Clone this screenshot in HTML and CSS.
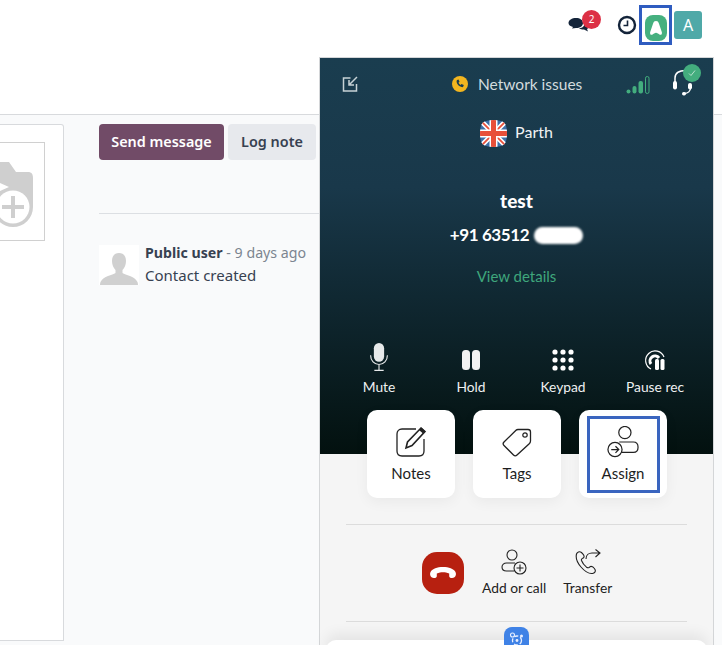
FILE: index.html
```html
<!DOCTYPE html>
<html lang="en">
<head>
<meta charset="utf-8">
<title>Contact</title>
<link rel="stylesheet" href="styles.css">
</head>
<body>
<header class="topbar">
  <div class="chat-icon">
    <svg width="23" height="20" viewBox="0 0 23 20"><path fill="#14243a" d="M8 3c4 0 7 2 7 5s-3 5-7 5l-4 .5L5 12C2 11 .5 10 .5 8 .5 5 4 3 8 3z"/><path fill="#14243a" d="M16 7c3 0 5 1.500 5 4 0 1.500-1 2.500-2 3l1 2.500-4-2c-2 0-4-.5-5-1.500 4 0 6-2 5-6z"/></svg>
    <span class="badge">2</span>
  </div>
  <svg class="clock" width="20" height="20" viewBox="0 0 20 20"><circle cx="10" cy="10" r="8" fill="#fff" stroke="#14243a" stroke-width="2.400"/><path d="M10.500 5.500v5H6.500" fill="none" stroke="#14243a" stroke-width="1.600"/></svg>
  <div class="app-highlight">
    <div class="app-icon"><svg width="12" height="14" viewBox="0 0 12 14"><path fill="#fff" d="M6 0c1.600 0 2.400.8 2.900 2.500L11.800 11c.5 2-.6 3.300-2 2.700C8.500 13 7.200 11.800 6 11.800S3.500 13 2.200 13.700c-1.400.6-2.500-.7-2-2.700L3.100 2.500C3.600.8 4.400 0 6 0z"/></svg></div>
  </div>
  <div class="avatar">A</div>
</header>

<main class="main">
  <section class="form-card">
    <div class="image-box">
      <svg width="60" height="70" viewBox="0 0 60 70"><path fill="#cfcfcf" d="M0 2H33L40 12H52C55.500 12 57 14 57 18V47A20 20 0 0 1 17 47V40H0z"/><path fill="#fff" d="M24 23l9 4-9 4z"/><circle cx="37" cy="47" r="16.500" fill="#fff"/><path d="M37 36v22M26 47h22" stroke="#cfcfcf" stroke-width="4"/></svg>
    </div>
  </section>
  <section class="chatter">
    <div class="chatter-buttons">
      <button class="btn btn-primary">Send message</button>
      <button class="btn btn-light">Log note</button>
    </div>
    <hr class="chatter-rule">
    <article class="message">
      <div class="msg-avatar"><svg width="40" height="40" viewBox="0 0 40 40"><rect width="40" height="40" fill="#fff"/><path fill="#d0d0d0" d="M20 8c4.500 0 7 3 7 8 0 4-1.500 7-3.500 9v3c3 2 12 3 15 9 .3 1 .5 2 .5 3H1c0-1 .2-2 .5-3 3-6 12-7 15-9v-3c-2-2-3.500-5-3.500-9 0-5 2.500-8 7-8z"/></svg></div>
      <div class="msg-body">
        <div class="msg-head"><strong>Public user</strong> <span>- 9 days ago</span></div>
        <div class="msg-text">Contact created</div>
      </div>
    </article>
  </section>
</main>

<aside class="phone">
  <div class="phone-head">
    <svg class="minimize" width="18" height="18" viewBox="0 0 18 18"><path d="M9.500 3H2.500v13h13V9" fill="none" stroke="#c7d2d6" stroke-width="1.500"/><path d="M16 2L8 10M8 5v5h5" fill="none" stroke="#c7d2d6" stroke-width="1.500"/></svg>
    <div class="net">
      <svg width="16" height="16" viewBox="0 0 16 16"><circle cx="8" cy="8" r="8" fill="#f3b61f"/><path fill="#1a3d4f" d="M5 4l1.500-.5 1 2.300-1 1c.4 1 1.100 1.700 2 2.100l1-1 2.300 1-.5 1.600c-.3.600-1 .8-1.700.6-2.700-.7-4.500-2.600-5-5 0-.9.100-1.700.4-2.100z"/></svg>
      <span>Network issues</span>
    </div>
    <svg class="signal" width="24" height="18" viewBox="0 0 24 18"><circle cx="2.500" cy="15.500" r="2" fill="#43ad7e"/><rect x="6.500" y="10" width="4" height="7.500" rx="2" fill="#43ad7e"/><rect x="12.500" y="5" width="4.500" height="12.500" rx="2" fill="#43ad7e"/><rect x="19.500" y=".5" width="3.500" height="17" rx="1.700" fill="none" stroke="#43ad7e"/></svg>
    <div class="headset">
      <svg width="22" height="28" viewBox="0 0 22 28"><path d="M3 14V10C3 5 7 2.500 14 2.500" fill="none" stroke="#fff" stroke-width="1.500"/><path d="M18.500 20c0 3-2.500 5.500-6 5.500" fill="none" stroke="#fff" stroke-width="1.300"/><rect x="1" y="13" width="4" height="8.500" rx="2" fill="#fff"/><rect x="16" y="15" width="4" height="6.500" rx="2" fill="#fff"/><rect x="10" y="24" width="4" height="3.500" rx="1.700" fill="#fff"/></svg>
      <span class="status"><svg width="10" height="10" viewBox="0 0 10 10"><path d="M2 5.500l2 2 4-5" fill="none" stroke="#b9e2cf" stroke-width="1"/></svg></span>
    </div>
  </div>

  <div class="agent">
    <svg class="flag" width="27" height="27" viewBox="0 0 27 27"><defs><clipPath id="sq"><path d="M13.500 0C24 0 27 3 27 13.500S24 27 13.500 27 0 24 0 13.500 3 0 13.500 0z"/></clipPath></defs><g clip-path="url(#sq)"><rect width="27" height="27" fill="#3d6fa8"/><path d="M0 0l27 27M27 0L0 27" stroke="#fff" stroke-width="5"/><path d="M0 0l27 27M27 0L0 27" stroke="#e8503a" stroke-width="1.800"/><path d="M13.500 0v27M0 13.500h27" stroke="#fff" stroke-width="8"/><path d="M13.500 0v27M0 13.500h27" stroke="#e8503a" stroke-width="5"/></g></svg>
    <span>Parth</span>
  </div>

  <div class="caller">
    <div class="caller-name">test</div>
    <div class="caller-num">+91 63512 <span class="blur"></span></div>
    <div class="caller-link">View details</div>
  </div>

  <div class="controls">
    <div class="ctrl">
      <svg width="24" height="30" viewBox="0 0 24 30"><rect x="6.500" y="0" width="11" height="20" rx="5.500" fill="#e7e9ea"/><path d="M3 13c0 6 4 10 9 10s9-4 9-10M12 23v6M7 29.300h10" fill="none" stroke="#e7e9ea" stroke-width="1.200"/></svg>
      <span>Mute</span>
    </div>
    <div class="ctrl">
      <svg width="20" height="22" viewBox="0 0 20 22"><rect x="1" y="1" width="8" height="20" rx="3.500" fill="#f2f2f2"/><rect x="11" y="1" width="8" height="20" rx="3.500" fill="#f2f2f2"/></svg>
      <span>Hold</span>
    </div>
    <div class="ctrl">
      <svg width="22" height="22" viewBox="0 0 22 22" fill="#fff"><circle cx="3" cy="3" r="2.600"/><circle cx="11" cy="3" r="2.600"/><circle cx="19" cy="3" r="2.600"/><circle cx="3" cy="11" r="2.600"/><circle cx="11" cy="11" r="2.600"/><circle cx="19" cy="11" r="2.600"/><circle cx="3" cy="19" r="2.600"/><circle cx="11" cy="19" r="2.600"/><circle cx="19" cy="19" r="2.600"/></svg>
      <span>Keypad</span>
    </div>
    <div class="ctrl">
      <svg width="22" height="22" viewBox="0 0 22 22"><path d="M7 20A9.500 9.500 0 1 1 20 8" fill="none" stroke="#fff" stroke-width="1.200"/><path d="M7 15a4.800 4.800 0 1 1 8-6" fill="none" stroke="#fff" stroke-width="3"/><rect x="11" y="10" width="4" height="11" rx="1.500" fill="#fff"/><rect x="16.500" y="10" width="4" height="11" rx="1.500" fill="#fff"/></svg>
      <span>Pause rec</span>
    </div>
  </div>

  <div class="cards">
    <div class="card">
      <svg width="32" height="32" viewBox="0 0 32 32"><path d="M21 3H7C4 3 2 5 2 8v17c0 3 2 5 5 5h17c3 0 5-2 5-5V13" fill="none" stroke="#222" stroke-width="1.300"/><path d="M26 2l4 3.500-13 14-6 2.500 1.500-6z" fill="#fff" stroke="#222" stroke-width="1.600"/><path d="M24 4l4 3.500 2-2.500-3.500-3.500z" fill="#222"/></svg>
      <span>Notes</span>
    </div>
    <div class="card">
      <svg width="32" height="32" viewBox="0 0 32 32"><path d="M17 3.500h10c1.500 0 2.500 1 2.500 2.500v9c0 1-.4 1.800-1 2.500L16 29c-1 1-2.500 1-3.500 0L3 19.500c-1-1-1-2.500 0-3.500L15 4.200c.5-.5 1.200-.7 2-.7z" fill="none" stroke="#222" stroke-width="1.300"/><circle cx="24" cy="9" r="2.200" fill="none" stroke="#222" stroke-width="1.200"/></svg>
      <span>Tags</span>
    </div>
    <div class="card card-marked">
      <svg width="34" height="34" viewBox="0 0 34 34"><circle cx="19" cy="7" r="6.500" fill="none" stroke="#222" stroke-width="1.300"/><path d="M13 17h15c3 0 5 2 5 5.500S31 28 28 28H14" fill="none" stroke="#222" stroke-width="1.300"/><circle cx="8.500" cy="25" r="7.500" fill="#fff" stroke="#222" stroke-width="1.300"/><path d="M4.500 25h8M9 21.500l3.500 3.500L9 28.500" fill="none" stroke="#222" stroke-width="1.300"/></svg>
      <span>Assign</span>
    </div>
  </div>

  <hr class="phone-rule first-rule">

  <div class="call-row">
    <div class="hangup"><svg width="26" height="12" viewBox="0 0 26 12"><path fill="#fff" d="M13 0C7 0 2.500 2 .8 4.500-.2 6-.2 8 .8 9.500c.6.800 1.500 1.300 3 1.500 1.500.2 3-.5 3-2V6.500C9 5.500 11 5.200 13 5.200s4 .3 6.200 1.300V9c0 1.500 1.500 2.200 3 2 1.500-.2 2.400-.7 3-1.500 1-1.500 1-3.500 0-5C23.500 2 19 0 13 0z"/></svg></div>
    <div class="call-action">
      <svg width="26" height="26" viewBox="0 0 26 26"><circle cx="11" cy="6" r="5" fill="none" stroke="#222" stroke-width="1.100"/><path d="M14 14H5.500C3 14 1 15.500 1 18s2 4 4.500 4H13" fill="none" stroke="#222" stroke-width="1.100"/><circle cx="19" cy="19" r="6" fill="#f5f5f5" stroke="#222" stroke-width="1.100"/><path d="M19 15.500v7M15.500 19h7" stroke="#222" stroke-width="1.100"/></svg>
      <span>Add or call</span>
    </div>
    <div class="call-action">
      <svg width="26" height="26" viewBox="0 0 26 26"><path d="M6.500 3.500C4.500 2 2 3 1.500 5c-1 4 1 9 4.500 13s8 7 11.500 6.500c2-.3 3.500-2 2.500-4l-1-1.500c-.5-.8-2.500-2-3.500-1.500l-1.500 1c-.8.500-1.500.3-2.500-.3-2-1.700-4-4-5-6.700-.3-1 .1-1.700 1-2l1-.7c1-.6.600-2.500-.3-3.500z" fill="none" stroke="#222" stroke-width="1.100"/><path d="M11 10c0-4 3-6 6-6h8M20.500 .5L25 4l-4.500 4" fill="none" stroke="#222" stroke-width="1.100"/></svg>
      <span>Transfer</span>
    </div>
  </div>

  <hr class="phone-rule second-rule">

  <div class="assist">
    <div class="assist-badge"><svg width="16" height="16" viewBox="0 0 16 16"><circle cx="8" cy="8.500" r="4.500" fill="none" stroke="#e9f0ff" stroke-width="1.300" stroke-dasharray="4 2"/><circle cx="3.500" cy="3" r="2" fill="none" stroke="#e9f0ff" stroke-width="1.100"/><circle cx="12.500" cy="4" r="1.500" fill="#e9f0ff"/><circle cx="8" cy="8.500" r="1.400" fill="#e9f0ff"/></svg></div>
  </div>
</aside>
```

FILE: styles.css
```css
*, *::before, *::after { box-sizing: border-box; }
html, body { margin: 0; padding: 0; }
body {
  width: 722px;
  height: 645px;
  overflow: hidden;
  position: relative;
  background: #fff;
  font-family: "Noto Sans", sans-serif;
  color: #374151;
}

/* top navigation */
.topbar {
  height: 115px;
  border-bottom: 1px solid #d8dadd;
  display: flex;
  align-items: flex-start;
  padding: 11px 20px 0 0;
  background: #fff;
}
.chat-icon { position: relative; width: 23px; height: 20px; margin-left: auto; margin-top: 4px; }
.chat-icon svg { display: block; }
.badge {
  position: absolute;
  left: 14px;
  top: -5px;
  width: 19px;
  height: 19px;
  border-radius: 50%;
  background: #dc3045;
  color: #fff;
  font-size: 10px;
  line-height: 18px;
  text-align: center;
}
.clock { margin-left: 26px; margin-top: 4px; }
.app-highlight {
  width: 33px;
  height: 40px;
  margin: -6px 2px 0 2px;
  border: 3px solid #2f5cc0;
  display: flex;
  justify-content: center;
  padding-top: 7px;
}
.app-icon {
  width: 22px;
  height: 26px;
  border-radius: 8px;
  background: #45b07f;
  display: flex;
  align-items: center;
  justify-content: center;
}
.avatar {
  width: 28px;
  height: 28px;
  border-radius: 3px;
  background: #4fa9a8;
  color: #fff;
  font-size: 16px;
  line-height: 28px;
  text-align: center;
}

/* page body */
.main {
  height: 530px;
  display: flex;
  background: #f9fafb;
  padding-top: 9px;
}
.form-card {
  width: 64px;
  height: 517px;
  background: #fff;
  border: 1px solid #d8dadd;
  border-left: 0;
  border-radius: 0 3px 0 0;
  padding: 17px 18px 0 0;
  display: flex;
  justify-content: flex-end;
}
.image-box {
  flex: none;
  width: 98px;
  height: 99px;
  border: 1px solid #d0d0d0;
  display: flex;
  align-items: flex-start;
  justify-content: flex-end;
  padding: 17px 0 0;
  overflow: hidden;
}
.image-box svg { flex: none; margin-right: 8px; }
.chatter { width: 221px; margin-left: 35px; }
.chatter-buttons { display: flex; gap: 4px; }
.btn {
  height: 36px;
  border: 0;
  border-radius: 4px;
  font-family: "Noto Sans", sans-serif;
  font-size: 14.400px;
  font-weight: 600;
  padding: 0 0 2px;
}
.btn-primary { width: 125px; background: #714b67; color: #fff; }
.btn-light { width: 88px; background: #e7e9ed; color: #374151; }
.chatter-rule { margin: 53px 0 0; border: 0; border-top: 1px solid #dcdfe3; }
.message { display: flex; gap: 6px; margin-top: 31px; }
.msg-avatar { width: 40px; height: 40px; }
.msg-avatar svg { display: block; }
.msg-body { font-size: 14.200px; line-height: 23px; white-space: nowrap; }
.msg-head { margin-top: -4px; }
.msg-head strong { font-weight: 700; }
.msg-head span { color: #7c8590; }
.msg-text { font-size: 15px; }

/* softphone panel */
.phone {
  position: absolute;
  left: 319px;
  top: 57px;
  width: 395px;
  height: 588px;
  border: 1px solid #d4d6d8;
  border-bottom: 0;
  background: linear-gradient(#1a3d4f 0, #19384a 130px, #03110f 396px, #f5f5f5 396px);
  font-family: "Lato", sans-serif;
  color: #fff;
}
.phone-head {
  height: 54px;
  display: flex;
  align-items: flex-start;
  padding: 16px 14px 0 21px;
}
.minimize { flex: none; margin-top: 1px; }
.net {
  display: flex;
  align-items: center;
  gap: 10px;
  margin-left: 93px;
  font-size: 15.500px;
  line-height: 20px;
  color: #d3dcdf;
  white-space: nowrap;
}
.signal { flex: none; margin-left: 44px; margin-top: 2px; }
.headset { position: relative; width: 28px; height: 28px; margin-left: 22px; margin-top: -6px; }
.headset svg { display: block; }
.status {
  position: absolute;
  left: 11px;
  top: -4px;
  width: 18px;
  height: 18px;
  border-radius: 50%;
  background: #43ad7e;
  display: flex;
  align-items: center;
  justify-content: center;
}
.agent {
  display: flex;
  align-items: center;
  justify-content: center;
  gap: 8px;
  height: 27px;
  margin-top: 8px;
  font-size: 16px;
  line-height: 22px;
  color: #f1f3f4;
}
.agent span { margin-bottom: 3px; }
.caller { text-align: center; margin-top: 42px; }
.caller-name { font-size: 19px; font-weight: 900; line-height: 24px; }
.caller-num {
  font-size: 17px;
  font-weight: 700;
  letter-spacing: -0.4px;
  line-height: 24px;
  margin-top: 10px;
  display: flex;
  justify-content: center;
  align-items: center;
  gap: 5px;
}
.blur {
  width: 49px;
  height: 17px;
  border-radius: 9px;
  background: #fff;
  filter: blur(1px);
}
.caller-link { font-size: 15px; line-height: 20px; color: #3fa67c; margin-top: 19px; }
.controls {
  display: grid;
  grid-template-columns: repeat(4, 92px);
  margin: 57px 0 0 13px;
}
.ctrl {
  height: 52px;
  display: flex;
  flex-direction: column;
  align-items: center;
  justify-content: flex-end;
  font-size: 13.800px;
  line-height: 17px;
  color: #eef0f1;
  gap: 7px;
}
.cards {
  display: flex;
  gap: 18px;
  margin: 15px 0 0 47px;
}
.card {
  position: relative;
  width: 88px;
  height: 88px;
  background: #fff;
  border-radius: 10px;
  box-shadow: 0 4px 14px rgba(0, 0, 0, 0.05);
  display: flex;
  flex-direction: column;
  align-items: center;
  padding-top: 16px;
  font-size: 15px;
  line-height: 20px;
  color: #1d1d1d;
  gap: 5px;
}
.card svg { height: 32px; }
.card-marked::after {
  content: "";
  position: absolute;
  left: 8px;
  top: 6px;
  width: 73px;
  height: 77px;
  border: 3px solid #3a65bf;
}
.phone-rule { border: 0; border-top: 1px solid #dcdcdc; margin: 0 26px; }
.first-rule { margin-top: 26px; }
.call-row {
  height: 96px;
  display: flex;
  align-items: flex-start;
  padding: 27px 0 0 102px;
  gap: 18px;
}
.hangup {
  width: 42px;
  height: 42px;
  border-radius: 15px;
  background: #b72010;
  display: flex;
  align-items: center;
  justify-content: center;
}
.call-action {
  display: flex;
  flex-direction: column;
  align-items: center;
  font-size: 13.800px;
  line-height: 17px;
  color: #222;
  gap: 4px;
  margin-top: -3px;
  white-space: nowrap;
}
.call-action + .call-action { margin-left: -1px; }
.assist {
  position: absolute;
  left: 6px;
  right: 6px;
  top: 582px;
  height: 20px;
  background: #fff;
  border-radius: 10px 10px 0 0;
  box-shadow: 0 -6px 14px rgba(0, 0, 0, 0.07);
  display: flex;
  justify-content: center;
}
.assist-badge {
  width: 25px;
  height: 25px;
  margin-top: -13px;
  border-radius: 8px;
  background: #3f82e6;
  display: flex;
  align-items: center;
  justify-content: center;
}
```
